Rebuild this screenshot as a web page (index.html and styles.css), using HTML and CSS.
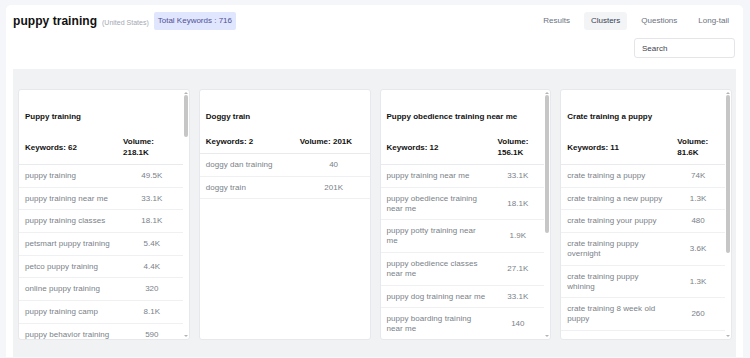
FILE: index.html
```html
<!DOCTYPE html>
<html lang="en">
<head>
<meta charset="utf-8">
<title>puppy training – Clusters</title>
<link rel="stylesheet" href="styles.css">
</head>
<body>
<div class="page">
  <div class="panel">
    <div class="topbar">
      <div class="heading">
        <h1 class="heading__title">puppy training</h1>
        <span class="heading__country">(United States)</span>
        <span class="badge">Total Keywords : 716</span>
      </div>
      <nav class="tabs">
        <a class="tab">Results</a>
        <a class="tab tab--active">Clusters</a>
        <a class="tab">Questions</a>
        <a class="tab">Long-tail</a>
      </nav>
    </div>
    <div class="searchrow">
      <input class="search" type="text" placeholder="Search">
    </div>
    <div class="board">
      <div class="cluster cluster--a">
        <div class="cluster__body">
          <div class="cluster__title">Puppy training</div>
          <table class="kw">
            <colgroup><col class="kw__col"><col></colgroup>
            <thead><tr><th>Keywords: 62</th><th>Volume: 218.1K</th></tr></thead>
            <tbody>
              <tr><td>puppy training</td><td class="vol">49.5K</td></tr>
              <tr><td>puppy training near me</td><td class="vol">33.1K</td></tr>
              <tr><td>puppy training classes</td><td class="vol">18.1K</td></tr>
              <tr><td>petsmart puppy training</td><td class="vol">5.4K</td></tr>
              <tr><td>petco puppy training</td><td class="vol">4.4K</td></tr>
              <tr><td>online puppy training</td><td class="vol">320</td></tr>
              <tr><td>puppy training camp</td><td class="vol">8.1K</td></tr>
              <tr><td>puppy behavior training</td><td class="vol">590</td></tr>
            </tbody>
          </table>
        </div>
        <div class="scrollbar">
          <span class="scrollbar__up"></span>
          <span class="scrollbar__track"><span class="scrollbar__thumb" style="height:42px"></span></span>
          <span class="scrollbar__down"></span>
        </div>
      </div>

      <div class="cluster cluster--b">
        <div class="cluster__body">
          <div class="cluster__title">Doggy train</div>
          <table class="kw">
            <colgroup><col class="kw__col"><col></colgroup>
            <thead><tr><th>Keywords: 2</th><th>Volume: 201K</th></tr></thead>
            <tbody>
              <tr><td>doggy dan training</td><td class="vol">40</td></tr>
              <tr><td>doggy train</td><td class="vol">201K</td></tr>
            </tbody>
          </table>
        </div>
      </div>

      <div class="cluster cluster--c">
        <div class="cluster__body">
          <div class="cluster__title">Puppy obedience training near me</div>
          <table class="kw">
            <colgroup><col class="kw__col"><col></colgroup>
            <thead><tr><th>Keywords: 12</th><th>Volume: 156.1K</th></tr></thead>
            <tbody>
              <tr><td>puppy training near me</td><td class="vol">33.1K</td></tr>
              <tr><td>puppy obedience training near me</td><td class="vol">18.1K</td></tr>
              <tr><td>puppy potty training near me</td><td class="vol">1.9K</td></tr>
              <tr><td>puppy obedience classes near me</td><td class="vol">27.1K</td></tr>
              <tr><td>puppy dog training near me</td><td class="vol">33.1K</td></tr>
              <tr><td>puppy boarding training near me</td><td class="vol">140</td></tr>
            </tbody>
          </table>
        </div>
        <div class="scrollbar">
          <span class="scrollbar__up"></span>
          <span class="scrollbar__track"><span class="scrollbar__thumb" style="height:138px"></span></span>
          <span class="scrollbar__down"></span>
        </div>
      </div>

      <div class="cluster cluster--d">
        <div class="cluster__body">
          <div class="cluster__title">Crate training a puppy</div>
          <table class="kw">
            <colgroup><col class="kw__col"><col></colgroup>
            <thead><tr><th>Keywords: 11</th><th>Volume: 81.6K</th></tr></thead>
            <tbody>
              <tr><td>crate training a puppy</td><td class="vol">74K</td></tr>
              <tr><td>crate training a new puppy</td><td class="vol">1.3K</td></tr>
              <tr><td>crate training your puppy</td><td class="vol">480</td></tr>
              <tr><td>crate training puppy overnight</td><td class="vol">3.6K</td></tr>
              <tr><td>crate training puppy whining</td><td class="vol">1.3K</td></tr>
              <tr><td>crate training 8 week old puppy</td><td class="vol">260</td></tr>
              <tr><td>crate training a lab puppy</td><td class="vol">170</td></tr>
            </tbody>
          </table>
        </div>
        <div class="scrollbar">
          <span class="scrollbar__up"></span>
          <span class="scrollbar__track"><span class="scrollbar__thumb" style="height:158px"></span></span>
          <span class="scrollbar__down"></span>
        </div>
      </div>
    </div>
  </div>
</div>
</body>
</html>
```

FILE: styles.css
```css
html, body {
  margin: 0;
  padding: 0;
  overflow: hidden;
}

body {
  background: #f4f6f9;
  font-family: "Liberation Sans", Arial, sans-serif;
  color: #111;
}

.page {
  padding: 5px 7px 0 6px;
}

.panel {
  background: #fff;
  border-radius: 5px 5px 0 0;
  padding: 7px 7px 0 7px;
}

/* ---------- top bar ---------- */
.topbar {
  display: flex;
  justify-content: space-between;
  align-items: center;
  height: 18px;
}

.heading {
  display: flex;
  align-items: center;
}

.heading__title {
  margin: 0;
  font-size: 12px;
  font-weight: bold;
  line-height: 18px;
  color: #111;
  letter-spacing: 0.05px;
}

.heading__country {
  margin-left: 5px;
  margin-top: 2px;
  font-size: 7px;
  color: #a3a8b3;
}

.badge {
  margin-left: 5px;
  height: 18px;
  line-height: 18px;
  padding: 0 4px;
  border-radius: 2px;
  background: #e0e6fd;
  color: #4f5197;
  font-size: 8px;
}

.tabs {
  display: flex;
  gap: 7px;
}

.tab {
  display: block;
  height: 18px;
  line-height: 18px;
  padding: 0 7px;
  border-radius: 3px;
  font-size: 8px;
  color: #6b7280;
}

.tab--active {
  background: #f3f4f6;
  color: #374151;
}

/* ---------- search ---------- */
.searchrow {
  display: flex;
  justify-content: flex-end;
  margin-top: 8px;
  padding-right: 1px;
}

.search {
  box-sizing: border-box;
  width: 101px;
  height: 20px;
  margin: 0;
  padding: 0 7px;
  border: 1px solid #e3e5e9;
  border-radius: 3px;
  font-family: "Liberation Sans", Arial, sans-serif;
  font-size: 8px;
  color: #374151;
  outline: none;
}

.search::placeholder {
  color: #3f4450;
}

/* ---------- board ---------- */
.board {
  margin-top: 11px;
  background: #f1f2f4;
  padding: 20px 4px 17px 5px;
  display: grid;
  grid-template-columns: repeat(4, 1fr);
  gap: 9px;
}

.cluster {
  height: 251px;
  box-sizing: border-box;
  background: #fff;
  border: 1px solid #e6e8eb;
  border-radius: 3px;
  display: flex;
  overflow: hidden;
}

.cluster__body {
  flex: 1;
  min-width: 0;
  overflow: hidden;
}

/* scrollbar drawn over the right edge of a scrolled card */
.scrollbar {
  flex: 0 0 6px;
  display: flex;
  flex-direction: column;
  align-items: center;
  padding: 2px 0;
  box-sizing: border-box;
}

.scrollbar__up,
.scrollbar__down {
  width: 0;
  height: 0;
  border-left: 2px solid transparent;
  border-right: 2px solid transparent;
}

.scrollbar__up {
  border-bottom: 2px solid #b3b3b3;
}

.scrollbar__down {
  border-top: 2px solid #b3b3b3;
}

.scrollbar__track {
  flex: 1;
  width: 100%;
  display: flex;
  justify-content: center;
  padding-top: 1px;
}

.scrollbar__thumb {
  width: 4px;
  border-radius: 2px;
  background: #c6c6c6;
}

.cluster__title {
  padding: 21px 6px 8px;
  font-size: 8px;
  line-height: 11px;
  font-weight: bold;
  color: #111;
}

.kw {
  width: 100%;
  border-collapse: collapse;
  table-layout: fixed;
}

.cluster--a .kw__col { width: 98px; }
.cluster--b .kw__col { width: 94px; }
.cluster--c .kw__col { width: 111px; }
.cluster--d .kw__col { width: 110px; }

.kw th {
  padding: 6px 6px 6px;
  font-size: 8px;
  line-height: 11px;
  font-weight: bold;
  color: #111;
  text-align: left;
  vertical-align: middle;
  border-bottom: 1px solid #e8eaed;
}

.kw td {
  padding: 5.85px 6px;
  font-size: 8px;
  line-height: 10px;
  color: #7a7f88;
  vertical-align: middle;
  border-bottom: 1px solid #eff0f2;
  letter-spacing: 0.05px;
}

.kw td.vol {
  text-align: center;
}

.cluster--a td.vol,
.cluster--b td.vol {
  padding-left: 10px;
  padding-right: 6px;
}
```
